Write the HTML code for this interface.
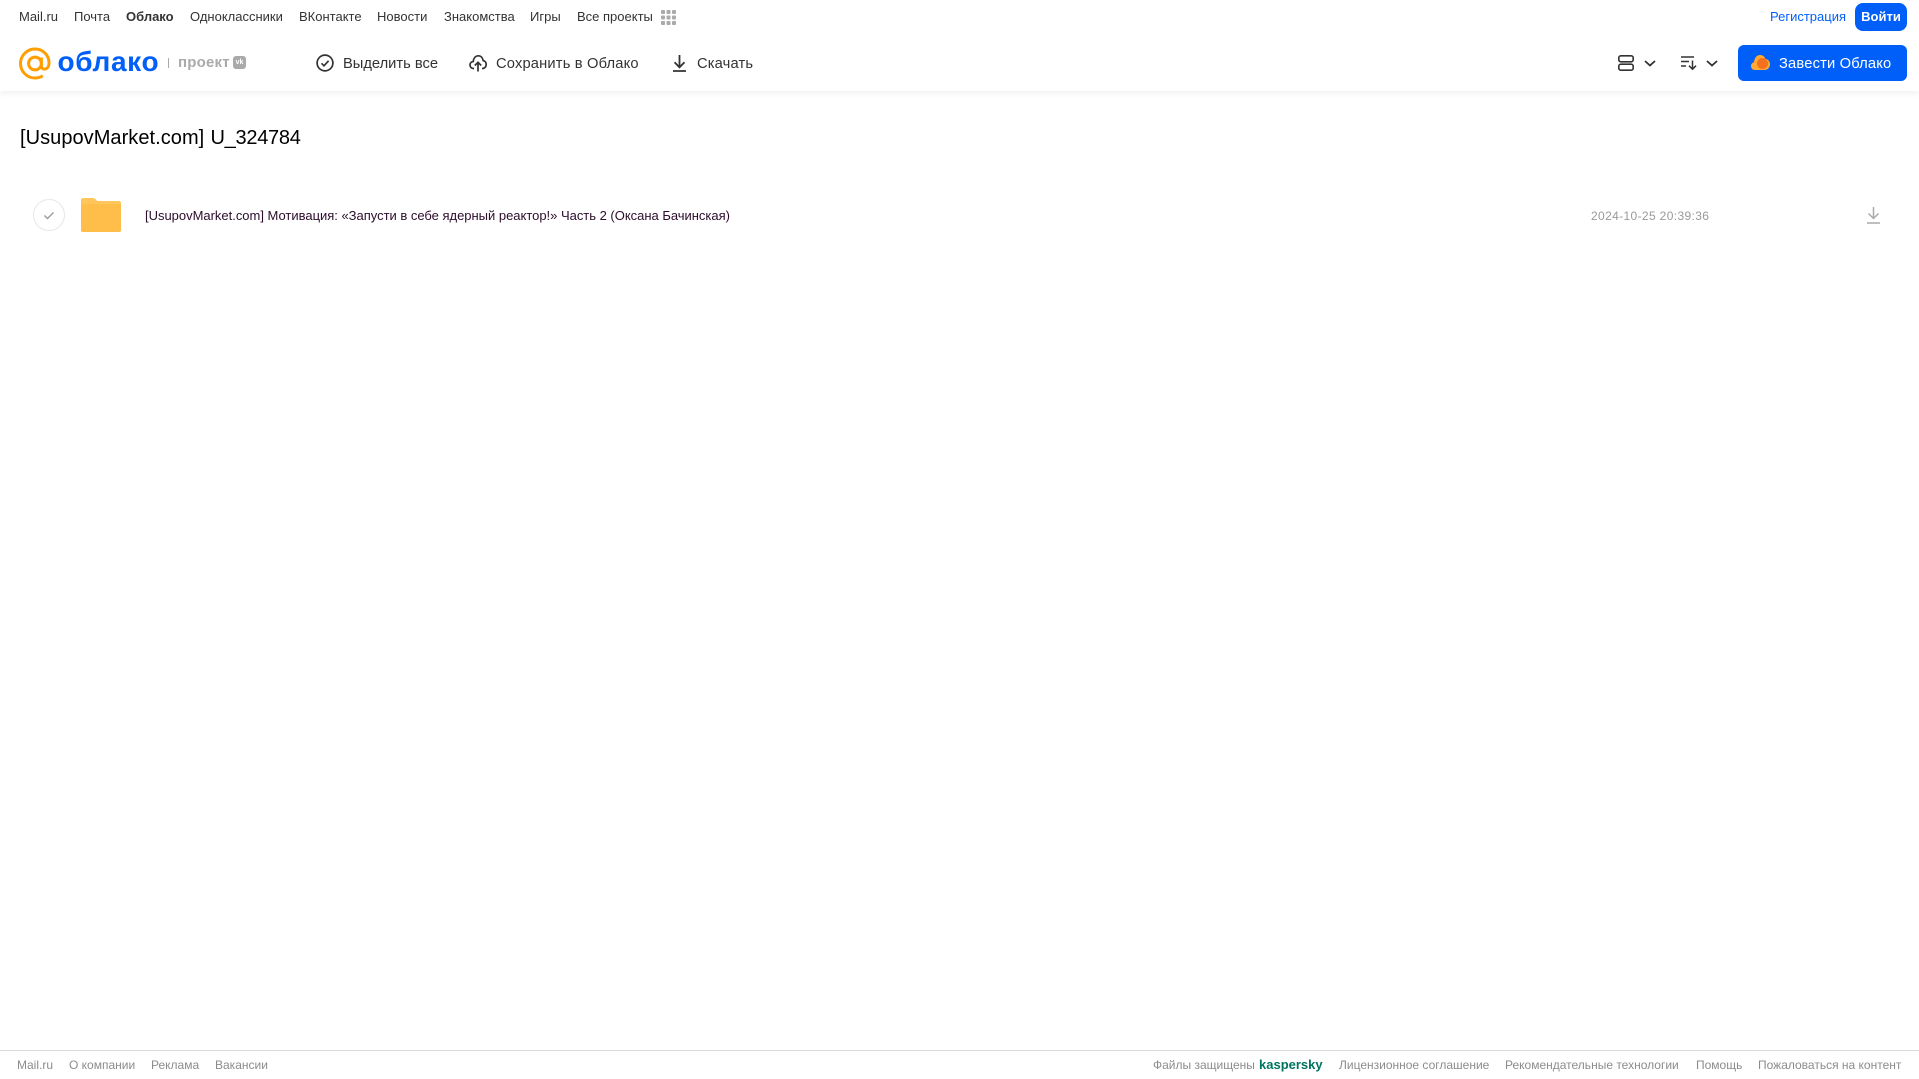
<!DOCTYPE html>
<html lang="ru"><head><meta charset="utf-8"><title>Облако</title>
<style>
html,body{margin:0;padding:0;width:1919px;height:1079px;overflow:hidden;background:#fff;font-family:"Liberation Sans",Arial,sans-serif}
.t{position:absolute;white-space:nowrap;line-height:16px}
.n{top:9px;font-size:13px;color:#333}
.a{top:56px;font-size:14.7px;color:#333}
.f{top:1057px;font-size:12px;color:#8c8c8c}
svg{position:absolute;overflow:visible}
</style></head><body>
<div style="position:absolute;left:0;top:0;width:1919px;height:91px;background:#fff;box-shadow:0 2px 6px rgba(0,0,0,.07)"></div>
<span class="t n" style="left:19px">Mail.ru</span>
<span class="t n" style="left:74px">Почта</span>
<span class="t n" style="left:126px;font-weight:700">Облако</span>
<span class="t n" style="left:190px">Одноклассники</span>
<span class="t n" style="left:299px">ВКонтакте</span>
<span class="t n" style="left:377px">Новости</span>
<span class="t n" style="left:444px">Знакомства</span>
<span class="t n" style="left:530px">Игры</span>
<span class="t n" style="left:577px">Все проекты</span>
<svg style="left:661px;top:10px" width="15" height="15" fill="#aaa"><rect width="4" height="4" rx="1"/><rect x="5.500" width="4" height="4" rx="1"/><rect x="11" width="4" height="4" rx="1"/><rect y="5.500" width="4" height="4" rx="1"/><rect x="5.500" y="5.500" width="4" height="4" rx="1"/><rect x="11" y="5.500" width="4" height="4" rx="1"/><rect y="11" width="4" height="4" rx="1"/><rect x="5.500" y="11" width="4" height="4" rx="1"/><rect x="11" y="11" width="4" height="4" rx="1"/></svg>
<svg style="left:19px;top:47px" width="32" height="33" fill="none" stroke="#ff9e00" stroke-width="3"><circle cx="16" cy="16.500" r="6.400"/><path d="M22.400 10.500v8.600c0 4.400 7.400 4.400 7.600-2.600C30.400 8.300 24 2 16 2 8 2 1.500 8.500 1.500 16.500S8 31 16 31c3 0 5.500-.8 7.800-2.300"/></svg>
<span class="t" style="left:57.500px;top:44px;font-size:28px;line-height:36px;font-weight:700;color:#005ff9;letter-spacing:.65px">облако</span>
<div style="position:absolute;left:168px;top:58px;width:1px;height:10px;background:#aaa"></div>
<span class="t" style="left:178px;top:55px;font-size:15px;font-weight:700;color:#aaa;letter-spacing:.2px">проект</span>
<div style="position:absolute;left:233px;top:56px;width:13px;height:13px;border-radius:3px;background:#aaa;color:#fff;font:700 7px/13px 'Liberation Sans',sans-serif;text-align:center">vk</div>
<svg style="left:316px;top:54px" width="18" height="18" fill="none" stroke="#333" stroke-width="1.700"><circle cx="9" cy="9" r="7.900"/><path d="M5.500 9.300l2.500 2.500 4.600-5"/></svg>
<span class="t a" style="left:343px">Выделить все</span>
<svg style="left:469px;top:54px" width="18" height="18" fill="none" stroke="#333" stroke-width="1.700"><path d="M5 14.500H4.500C2.300 14.500 1 12.800 1 11c0-1.900 1.400-3.300 3.200-3.500C4.700 4 6.600 1.800 9.300 1.800c2.600 0 4.400 2 4.800 4.700 1.900.3 3.100 2.100 3.100 4 0 2.200-1.500 4-3.700 4H13"/><path d="M9 17.500V8.500M5.800 11.500L9 8.300l3.200 3.200"/></svg>
<span class="t a" style="left:496px;letter-spacing:.17px">Сохранить в Облако</span>
<svg style="left:672px;top:54px" width="15" height="18" fill="none" stroke="#333" stroke-width="1.800"><path d="M7.500 1v12M2.500 8.300l5 5 5-5M1 17h13"/></svg>
<span class="t a" style="left:697px;letter-spacing:.15px">Скачать</span>
<svg style="left:1618px;top:55px" width="16" height="16" fill="none" stroke="#333" stroke-width="1.600"><rect x=".8" y=".8" width="14.400" height="6" rx="2"/><rect x=".8" y="9.200" width="14.400" height="6" rx="2"/></svg>
<svg style="left:1644px;top:60px" width="12" height="7" fill="none" stroke="#333" stroke-width="1.800"><path d="M1 1l5 4.500L11 1"/></svg>
<svg style="left:1681px;top:56px" width="16" height="14" fill="none" stroke="#333" stroke-width="1.500"><path d="M0 1h13M0 5.500h8M0 10h5M11.500 4.500v8.500M8 9.700l3.500 3.500 3.500-3.500"/></svg>
<svg style="left:1706px;top:60px" width="12" height="7" fill="none" stroke="#333" stroke-width="1.800"><path d="M1 1l5 4.500L11 1"/></svg>
<span class="t n" style="left:1770px;color:#005ff9">Регистрация</span>
<div style="position:absolute;left:1855px;top:3px;width:52px;height:28px;border-radius:8px;background:#005ff9;color:#fff;font-size:13px;font-weight:700;line-height:28px;text-align:center">Войти</div>
<div style="position:absolute;left:1738px;top:45px;width:169px;height:36px;border-radius:6px;background:#005ff9"></div>
<svg style="left:1751px;top:54px" width="19" height="17"><path d="M4 16C1.500 16 0 14.200 0 12c0-1.900 1.200-3.400 3-3.800C3.500 3.500 6 1 9 1c2.700 0 4.500 1.500 5.300 3.700C17 5.200 19 7.300 19 10.300 19 13.500 16.800 16 13.500 16z" fill="#ffa930"/><circle cx="11.500" cy="9.500" r="5.500" fill="#f5701e"/></svg>
<span class="t a" style="left:1779px;color:#fff;letter-spacing:.18px">Завести Облако</span>
<span class="t" style="left:20px;top:125px;font-size:20px;line-height:26px;color:#000;letter-spacing:.05px">[UsupovMarket.com]</span>
<span class="t" style="left:210.500px;top:125px;font-size:20px;line-height:26px;color:#000;letter-spacing:-.28px">U_324784</span>
<div style="position:absolute;left:33px;top:199px;width:30px;height:30px;border:1px solid #e7e7e7;border-radius:50%"></div>
<svg style="left:43px;top:211px" width="12" height="9" fill="none" stroke="#999" stroke-width="1.400"><path d="M1.500 4.500l3 3 6-6"/></svg>
<svg style="left:81px;top:198px" width="40" height="34"><path d="M2 0h9c2.500 0 4 1 5 3h22c1.200 0 2 .8 2 2v27c0 1.200-.8 2-2 2H2c-1.200 0-2-.8-2-2V2C0 .8.800 0 2 0z" fill="#ffc65c"/><path d="M0 8c0-1.200.8-2 2-2h36c1.200 0 2 .8 2 2v24c0 1.200-.8 2-2 2H2c-1.200 0-2-.8-2-2z" fill="#ffbd4a"/></svg>
<span class="t" style="left:145px;top:208px;font-size:13px;color:#2c0d2c;letter-spacing:-.015px">[UsupovMarket.com] Мотивация: «Запусти в себе ядерный реактор!» Часть 2 (Оксана Бачинская)</span>
<span class="t" style="left:1591px;top:208px;font-size:12px;color:#999;letter-spacing:.36px">2024-10-25 20:39:36</span>
<svg style="left:1867px;top:207px" width="13" height="17" fill="none" stroke="#aaa" stroke-width="1.500"><path d="M6.500 0v11.500M1.500 6.500l5 5 5-5M0 16h13"/></svg>
<div style="position:absolute;left:0;top:1050px;width:1919px;height:1px;background:#d9d9d9"></div>
<span class="t f" style="left:17px">Mail.ru</span>
<span class="t f" style="left:69px">О компании</span>
<span class="t f" style="left:151px">Реклама</span>
<span class="t f" style="left:215px">Вакансии</span>
<span class="t f" style="left:1153px">Файлы защищены</span>
<span class="t f" style="left:1259px;font-weight:700;font-size:13px;color:#00745f">kaspersky</span>
<span class="t f" style="left:1339px">Лицензионное соглашение</span>
<span class="t f" style="left:1505px">Рекомендательные технологии</span>
<span class="t f" style="left:1696px">Помощь</span>
<span class="t f" style="left:1758px">Пожаловаться на контент</span>
</body></html>
